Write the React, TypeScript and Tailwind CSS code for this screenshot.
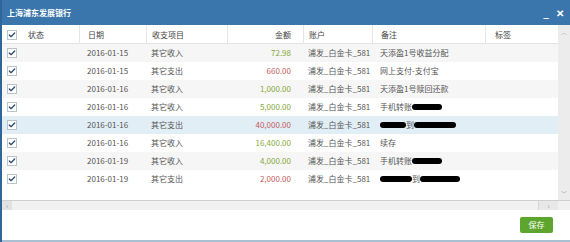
import { Check } from "lucide-react";

interface Row {
  date: string;
  type: string;
  amount: string;
  income: boolean;
  note: React.ReactNode;
  active?: boolean;
}

const Blot = ({ w }: { w: number }) => (
  <span
    className="inline-block h-[6px] rounded-full bg-black align-middle"
    style={{ width: w }}
  />
);

const rows: Row[] = [
  { date: "2016-01-15", type: "其它收入", amount: "72.98", income: true, note: "天添盈1号收益分配" },
  { date: "2016-01-15", type: "其它支出", amount: "660.00", income: false, note: "网上支付-支付宝" },
  { date: "2016-01-16", type: "其它收入", amount: "1,000.00", income: true, note: "天添盈1号赎回还款" },
  {
    date: "2016-01-16",
    type: "其它收入",
    amount: "5,000.00",
    income: true,
    note: (
      <>
        手机转账
        <Blot w={30} />
      </>
    ),
  },
  {
    date: "2016-01-16",
    type: "其它支出",
    amount: "40,000.00",
    income: false,
    active: true,
    note: (
      <>
        <Blot w={26} />
        到
        <Blot w={42} />
      </>
    ),
  },
  { date: "2016-01-16", type: "其它收入", amount: "16,400.00", income: true, note: "续存" },
  {
    date: "2016-01-19",
    type: "其它收入",
    amount: "4,000.00",
    income: true,
    note: (
      <>
        手机转账
        <Blot w={30} />
      </>
    ),
  },
  {
    date: "2016-01-19",
    type: "其它支出",
    amount: "2,000.00",
    income: false,
    note: (
      <>
        <Blot w={32} />
        到
        <Blot w={40} />
      </>
    ),
  },
];

const cols = "grid grid-cols-[18px_59px_67px_81px_76px_69px_113px_73px]";

const Box = () => (
  <span className="flex h-[10px] w-[10px] items-center justify-center border border-[#b9c3cc] bg-white">
    <Check size={8} strokeWidth={4} className="text-[#2c4f78]" />
  </span>
);

export default function App() {
  return (
    <div
      className="h-[242px] w-[570px] overflow-hidden border-l-2 border-[#2f6699] bg-white text-[8px] text-[#555]"
      style={{ fontFamily: '"Noto Sans CJK SC", "Noto Sans", sans-serif' }}
    >
      {/* 标题栏 */}
      <div className="flex h-[25px] items-center justify-between bg-[#3a76ab] pl-[5px] pr-[6px] text-white">
        <span className="font-bold">上海浦东发展银行</span>
        <div className="flex items-center gap-[7px] text-[10px] font-bold">
          <span className="leading-none">_</span>
          <span className="leading-none">✕</span>
        </div>
      </div>

      {/* 表格 */}
      <div className="flex h-[175px]">
        <div className="flex-1">
          <div className={`${cols} h-[19px] items-center border-b border-[#e3e3e3] text-[#444]`}>
            <div className="flex justify-center pl-[1px]">
              <Box />
            </div>
            <div className="pl-[8px]">状态</div>
            <div className="h-full border-l border-[#e6e6e6] pl-[8px] leading-[19px]">日期</div>
            <div className="h-full border-l border-[#e6e6e6] pl-[5px] leading-[19px]">收支项目</div>
            <div className="h-full border-l border-[#e6e6e6] pr-[12px] text-right leading-[19px]">金额</div>
            <div className="h-full border-l border-[#e6e6e6] pl-[5px] leading-[19px]">账户</div>
            <div className="h-full border-l border-[#e6e6e6] pl-[8px] leading-[19px]">备注</div>
            <div className="h-full border-l border-[#e6e6e6] pl-[9px] leading-[19px]">标签</div>
          </div>
          {rows.map((r, i) => (
            <div
              key={i}
              className={`${cols} h-[18px] items-center ${
                r.active ? "bg-[#e2eef6]" : i % 2 === 0 ? "bg-[#f6f6f6]" : "bg-white"
              }`}
            >
              <div className="flex justify-center pl-[1px]">
                <Box />
              </div>
              <div />
              <div className="pl-[8px]">{r.date}</div>
              <div className="pl-[5px]">{r.type}</div>
              <div
                className={`pr-[12px] text-right ${
                  r.income ? "text-[#86a83c]" : "text-[#c25b5b]"
                }`}
              >
                {r.amount}
              </div>
              <div className="pl-[5px]">浦发_白金卡_581</div>
              <div className="flex items-center pl-[8px]">{r.note}</div>
              <div />
            </div>
          ))}
        </div>
        {/* 竖向滚动条 */}
        <div className="flex w-[12px] flex-col items-center justify-between bg-[#ececec] py-[2px] text-[6px] text-[#aaa]">
          <span>︿</span>
          <span>﹀</span>
        </div>
      </div>

      {/* 横向滚动条 */}
      <div className="flex h-[10px] items-center border-t border-[#cfcfcf] bg-[#f1f1f1] text-[7px] text-[#999]">
        <span className="flex h-full w-[10px] items-center justify-center bg-[#e2e2e2]">‹</span>
        <div className="flex-1" />
        <span className="flex h-full w-[20px] items-center justify-center border-l border-[#d4d4d4] bg-[#e8e8e8]">›</span>
        <span className="w-[12px]" />
      </div>

      {/* 底部 */}
      <div className="flex h-[32px] items-start justify-end border-b-2 border-[#a9c0d3] pr-[17px] pt-[7px]">
        <button className="h-[16px] w-[33px] rounded-[2px] bg-[#5ea52e] text-[8px] text-white">
          保存
        </button>
      </div>
    </div>
  );
}
